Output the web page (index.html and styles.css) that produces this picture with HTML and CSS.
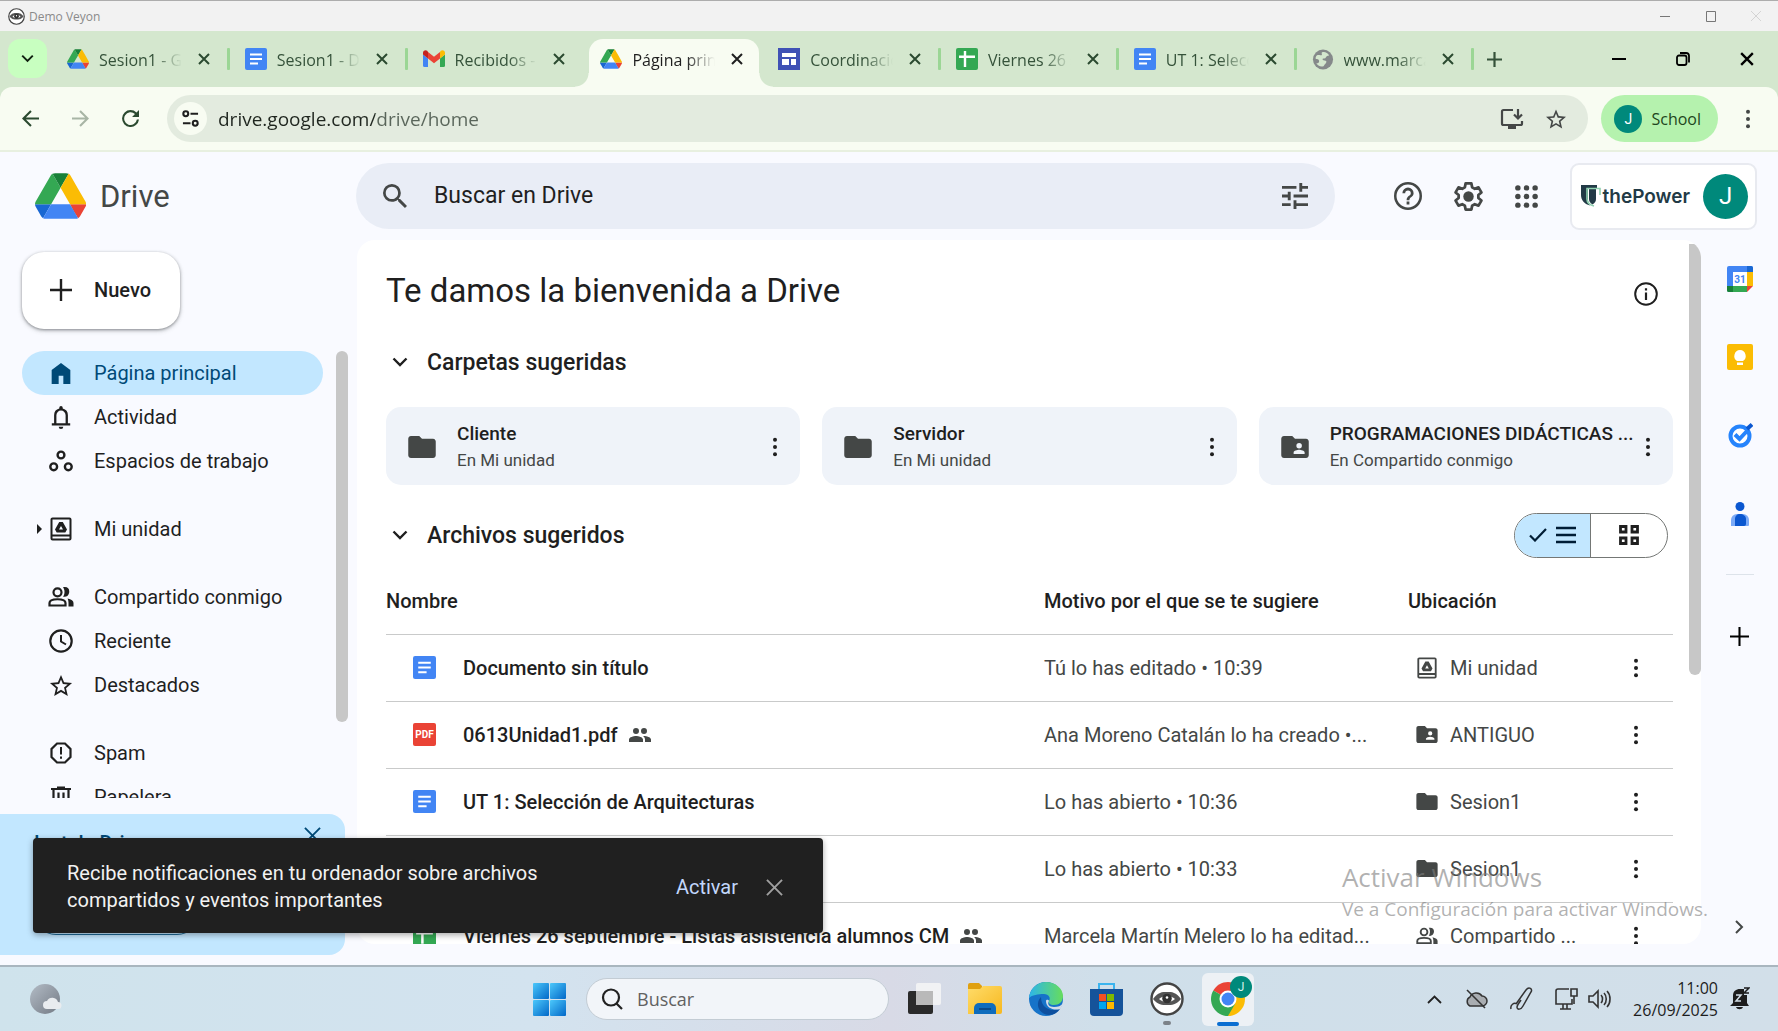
FILE: index.html
```html
<!DOCTYPE html>
<html lang="es">
<head>
<meta charset="utf-8">
<title>Demo Veyon</title>
<link rel="stylesheet" href="styles.css">
</head>
<body>
<svg class="sprite" aria-hidden="true">
  <linearGradient id="g-sky" x1="0" y1="0" x2="1" y2="1"><stop offset="0" stop-color="#4cc8fb"/><stop offset="1" stop-color="#0268c8"/></linearGradient>
  <linearGradient id="g-edge" x1="0" y1="0" x2="1" y2="0"><stop offset="0" stop-color="#2cb5ea"/><stop offset="1" stop-color="#67dd5c"/></linearGradient>
  <linearGradient id="g-moon" x1="0" y1="0" x2="1" y2="1"><stop offset="0" stop-color="#b3bcc6"/><stop offset="1" stop-color="#737a84"/></linearGradient>
  <linearGradient id="g-folder" x1="0" y1="0" x2="1" y2="1"><stop offset="0" stop-color="#ffdc6a"/><stop offset="1" stop-color="#f7b81f"/></linearGradient>
  <symbol id="drive" viewBox="0 0 87 78">
    <path fill="#1967d2" d="M6.6 66.85l3.85 6.65c.8 1.4 1.95 2.5 3.3 3.3L27.5 53H0c0 1.55.4 3.1 1.2 4.5z"/>
    <path fill="#34a853" d="M43.65 25L29.9 1.2c-1.35.8-2.5 1.9-3.3 3.3L1.2 48.5C.4 49.9 0 51.45 0 53h27.5z"/>
    <path fill="#ea4335" d="M73.55 76.8c1.35-.8 2.5-1.9 3.3-3.3l9.25-16c.8-1.4 1.2-2.95 1.2-4.5H59.8l5.85 11.5z"/>
    <path fill="#188038" d="M43.65 25L57.4 1.2C56.05.4 54.5 0 52.9 0H34.4c-1.6 0-3.15.45-4.5 1.2z"/>
    <path fill="#4285f4" d="M59.8 53H27.5L13.75 76.8c1.35.8 2.9 1.2 4.5 1.2h50.8c1.6 0 3.15-.45 4.5-1.2z"/>
    <path fill="#fbbc04" d="M73.4 26.5L60.7 4.5c-.8-1.4-1.95-2.5-3.3-3.3L43.65 25 59.8 53h27.45c0-1.55-.4-3.1-1.2-4.5z"/>
  </symbol>
  <symbol id="docs" viewBox="0 0 22 22"><rect width="22" height="22" rx="2" fill="#4285f4"/><path stroke="#fff" stroke-width="2" d="M5 6.5h12M5 11h12M5 15.500h8"/></symbol>
  <symbol id="sheets" viewBox="0 0 22 22"><rect width="22" height="22" rx="2" fill="#34a853"/><path stroke="#fff" stroke-width="2.400" d="M3 8.800h16M9 3v16"/></symbol>
  <symbol id="sites" viewBox="0 0 22 22"><rect width="22" height="22" fill="#3f51b5"/><path fill="#fff" d="M4 5h14v4H4zM4 11h7v6H4zM13 11h5v6h-5z"/></symbol>
  <symbol id="gmail" viewBox="0 0 22 18"><path fill="#4285f4" d="M1.500 17H5V8.500L0 4.500v11A1.500 1.500 0 001.500 17z"/><path fill="#34a853" d="M17 17h3.500a1.500 1.500 0 001.500-1.500v-11l-5 4z"/><path fill="#fbbc04" d="M17 2v6.500l5-4V2.800C22 .5 19.500-.6 17.800.8z"/><path fill="#ea4335" d="M5 8.500V2l6 4.700L17 2v6.500l-6 4.700z"/><path fill="#c5221f" d="M0 2.800v1.700l5 4V2L4.200.8C2.500-.6 0 .5 0 2.800z"/></symbol>
  <symbol id="globe" viewBox="0 0 24 24"><circle cx="12" cy="12" r="11.500" fill="#85898a"/><path fill="#d4e7ce" d="M13 3.500c2 0 5 1.500 6 4-2 0-3 1-4 2.500s-3 0-3.500 1.500 2 1.500 3.500 2 1 2.500-.5 3.500-1 2.500-3 3c-3 .5-6-1.500-7-4 1.500.5 2.500 0 3-1.500s-1-3-2.500-3-2-1-1-3 3-2 5-1.500 2-1 1.500-2 1-1.500 2.500-1.500z"/></symbol>
  <symbol id="veyon" viewBox="0 0 34 34"><circle cx="17" cy="17" r="15.500" fill="#fff" stroke="#444" stroke-width="2.400"/><path fill="#555" d="M3 17c5-7 9-7 14-7s9 0 14 7c-5 6-9 6-14 6s-9 0-14-6z"/><path fill="#fff" d="M9 17c4-4 12-4 16 0-4 4-12 4-16 0z"/><circle cx="17" cy="16.500" r="4.800" fill="#333"/><circle cx="17" cy="15.500" r="1.300" fill="#fff"/></symbol>
  <symbol id="x" viewBox="0 0 12 12"><path fill="none" stroke="currentColor" stroke-width="2" d="M1 1l10 10M11 1L1 11"/></symbol>
  <symbol id="x-thin" viewBox="0 0 18 18"><path fill="none" stroke="currentColor" stroke-width="2" d="M1 1l16 16M17 1L1 17"/></symbol>
  <symbol id="plus" viewBox="0 0 22 22"><path fill="none" stroke="currentColor" stroke-width="2.400" d="M11 0v22M0 11h22"/></symbol>
  <symbol id="down" viewBox="0 0 16 10"><path fill="none" stroke="currentColor" stroke-width="2.400" d="M1.500 1.500L8 8l6.500-6.500"/></symbol>
  <symbol id="back" viewBox="0 0 18 18"><path fill="none" stroke="currentColor" stroke-width="2.200" d="M18 9H2M9.500 1L1.500 9l8 8"/></symbol>
  <symbol id="forward" viewBox="0 0 18 18"><path fill="none" stroke="currentColor" stroke-width="2.200" d="M0 9h16M8.500 1l8 8-8 8"/></symbol>
  <symbol id="reload" viewBox="4 4 16 16"><path fill="currentColor" d="M17.650 6.350A7.958 7.958 0 0012 4a8 8 0 108 9h-2a6 6 0 11-1.800-5.200L13.500 10.500H20V4z"/></symbol>
  <symbol id="site" viewBox="0 0 18 18"><g fill="none" stroke="currentColor" stroke-width="2.200"><circle cx="4" cy="4" r="2.600"/><circle cx="14" cy="14" r="2.600"/><path d="M9 4h8M1 14h8"/></g></symbol>
  <symbol id="install" viewBox="0 0 24 24"><path fill="none" stroke="currentColor" stroke-width="2.200" d="M13 3H3.500A1.500 1.500 0 002 4.500v12A1.500 1.500 0 003.500 18h17a1.500 1.500 0 001.500-1.500V14M18 2v9M14 7.500l4 4 4-4"/><path fill="currentColor" d="M8 18h8v4H8z"/></symbol>
  <symbol id="star" viewBox="2 2 20 19"><path fill="currentColor" d="M22 9.240l-7.190-.62L12 2 9.190 8.630 2 9.240l5.460 4.730L5.820 21 12 17.270 18.180 21l-1.630-7.030zM12 15.400l-3.760 2.270 1-4.280-3.320-2.880 4.380-.38L12 6.100l1.710 4.040 4.380.38-3.320 2.880 1 4.280z"/></symbol>
  <symbol id="dots" viewBox="0 0 6 22"><g fill="currentColor"><circle cx="3" cy="3" r="2.200"/><circle cx="3" cy="11" r="2.200"/><circle cx="3" cy="19" r="2.200"/></g></symbol>
  <symbol id="search" viewBox="3 3 17.500 17.500"><path fill="currentColor" d="M15.500 14h-.79l-.28-.27A6.471 6.471 0 0016 9.500 6.500 6.500 0 109.500 16c1.610 0 3.090-.59 4.230-1.570l.27.28v.79l5 4.990L20.490 19zm-6 0C7.010 14 5 11.990 5 9.500S7.010 5 9.500 5 14 7.010 14 9.500 11.990 14 9.500 14z"/></symbol>
  <symbol id="tune" viewBox="3 3 18 18"><path fill="currentColor" d="M3 17v2h6v-2zM3 5v2h10V5zm10 16v-2h8v-2h-8v-2h-2v6zM7 9v2H3v2h4v2h2V9zm14 4v-2H11v2zm-6-4h2V7h4V5h-4V3h-2z"/></symbol>
  <symbol id="help" viewBox="2 2 20 20"><path fill="currentColor" d="M11 18h2v-2h-2zm1-16a10 10 0 100 20 10 10 0 000-20zm0 18.200a8.200 8.200 0 110-16.400 8.200 8.200 0 010 16.400zM12 6a4 4 0 00-4 4h2a2 2 0 114 0c0 2-3 1.750-3 5h2c0-2.250 3-2.500 3-5a4 4 0 00-4-4z"/></symbol>
  <symbol id="gear" viewBox="2 2 20 20"><path fill="none" stroke="currentColor" stroke-width="1.900" stroke-linejoin="round" d="M10 3h4l.5 2.700 1.800 1 2.600-1 2 3.500-2.100 1.800v2l2.100 1.800-2 3.500-2.600-1-1.800 1L14 21h-4l-.5-2.700-1.800-1-2.600 1-2-3.500L5.200 13v-2L3.100 9.200l2-3.500 2.600 1 1.800-1z"/><circle cx="12" cy="12" r="3.600" fill="currentColor"/></symbol>
  <symbol id="apps" viewBox="4 4 16 16"><g fill="currentColor"><circle cx="6" cy="6" r="1.900"/><circle cx="12" cy="6" r="1.900"/><circle cx="18" cy="6" r="1.900"/><circle cx="6" cy="12" r="1.900"/><circle cx="12" cy="12" r="1.900"/><circle cx="18" cy="12" r="1.900"/><circle cx="6" cy="18" r="1.900"/><circle cx="12" cy="18" r="1.900"/><circle cx="18" cy="18" r="1.900"/></g></symbol>
  <symbol id="shield" viewBox="0 0 20 22"><path fill="#223a46" d="M0 0h16v3H7v12c0 2 1 4 2 5.500C3 19 0 15 0 10z"/><path fill="#223a46" d="M8 4h7v10c0 2-1 4-3.500 5.500C9 18 8 16 8 14z"/><path fill="none" stroke="#8fd0b0" stroke-width="1.600" d="M19 10V3.500H6V14c0 4 3 6 7 7"/></symbol>
  <symbol id="home" viewBox="4 3 16 18"><path fill="currentColor" d="M4 21V9l8-6 8 6v12h-6v-7h-4v7z"/></symbol>
  <symbol id="bell" viewBox="3 2 18 20"><path fill="currentColor" d="M4 19v-2h2v-7a6 6 0 014.500-5.800V3.500a1.500 1.500 0 013 0v.7A6 6 0 0118 10v7h2v2zm4-2h8v-7a4 4 0 00-8 0zm2 3h4a2 2 0 01-4 0z"/></symbol>
  <symbol id="spaces" viewBox="0 0 24 24"><g fill="none" stroke="currentColor" stroke-width="2.400"><circle cx="12" cy="6" r="3.400"/><circle cx="4.700" cy="17.800" r="3.400"/><circle cx="19.300" cy="17.800" r="3.400"/></g></symbol>
  <symbol id="mydrive" viewBox="0 0 22 24"><path fill="none" stroke="currentColor" stroke-width="2" d="M2.500 1.500h17a1 1 0 011 1v19a1 1 0 01-1 1h-17a1 1 0 01-1-1v-19a1 1 0 011-1zM2 18.500h18"/><path fill="currentColor" fill-rule="evenodd" d="M9.200 5h3.600L17 12.500 15.300 15.500H6.700L5 12.500zM11 9l-2 3.500h4z"/></symbol>
  <symbol id="people" viewBox="0 0 26 20"><g fill="none" stroke="currentColor" stroke-width="2.200"><circle cx="9.500" cy="5.300" r="4"/><path d="M1.500 18.500V16c0-5 16-5 16 0v2.500z"/></g><path fill="currentColor" d="M15 .3c5-1 7 2 6 6-.8 3-3 4-6 3.400 2-2.500 2-7 0-9.400zM19.500 11.500c4 .8 6 2.500 6 4.500v3.600h-5V16c0-2-.3-3-1-4.500z"/></symbol>
  <symbol id="clock" viewBox="0 0 24 24"><circle cx="12" cy="12" r="10.700" fill="none" stroke="currentColor" stroke-width="2.200"/><path fill="none" stroke="currentColor" stroke-width="2" d="M12 6v6.500l5 3"/></symbol>
  <symbol id="spam" viewBox="0 0 22 22"><path fill="none" stroke="currentColor" stroke-width="2.200" d="M7 1.500h8L20.500 7v8L15 20.500H7L1.500 15V7z"/><path fill="currentColor" d="M10 5h2v7.500h-2zM10 14.500h2v2.200h-2z"/></symbol>
  <symbol id="trash" viewBox="0 0 20 22"><path fill="none" stroke="currentColor" stroke-width="2.200" d="M0 3h20M6 1.500h8M2.500 3v17.500h15V3M7.500 6.500v11M12.500 6.500v11"/></symbol>
  <symbol id="folder" viewBox="2 4 20 16"><path fill="currentColor" d="M10 4H4c-1.100 0-2 .9-2 2v12c0 1.100.9 2 2 2h16c1.100 0 2-.9 2-2V8c0-1.100-.9-2-2-2h-8z"/></symbol>
  <symbol id="folder-shared" viewBox="2 4 20 16"><path fill="currentColor" d="M20 6h-8l-2-2H4c-1.100 0-2 .9-2 2v12c0 1.100.9 2 2 2h16c1.100 0 2-.9 2-2V8c0-1.100-.9-2-2-2zm-5 3a2 2 0 110 4 2 2 0 010-4zm4 8h-8v-1c0-1.330 2.670-2 4-2s4 .67 4 2z"/></symbol>
  <symbol id="group" viewBox="1 5 22 14"><path fill="currentColor" d="M16 11a3 3 0 10-3-3 3 3 0 003 3zm-8 0a3 3 0 10-3-3 3 3 0 003 3zm0 2c-2.330 0-7 1.170-7 3.500V19h14v-2.500C15 14.170 10.330 13 8 13zm8 0c-.29 0-.62.020-.97.050 1.160.84 1.970 1.970 1.970 3.450V19h6v-2.500c0-2.330-4.670-3.500-7-3.500z"/></symbol>
  <symbol id="info" viewBox="0 0 24 24"><circle cx="12" cy="12" r="10.800" fill="none" stroke="currentColor" stroke-width="2"/><path fill="currentColor" d="M10.900 10.500h2.200V18h-2.200zM10.900 6.300h2.200v2.200h-2.200z"/></symbol>
  <symbol id="check" viewBox="0 0 18 14"><path fill="none" stroke="currentColor" stroke-width="2.200" d="M1 7.500l5 5L17 1"/></symbol>
  <symbol id="list" viewBox="0 0 20 18"><path stroke="currentColor" stroke-width="2.600" d="M0 2h20M0 9h20M0 16h20"/></symbol>
  <symbol id="grid" viewBox="0 0 20 20"><path fill="none" stroke="currentColor" stroke-width="2.800" d="M1.500 1.500h5.500v5.500H1.500zM13 1.500h5.500v5.500H13zM1.500 13h5.500v5.500H1.500zM13 13h5.500v5.500H13z"/></symbol>
</svg>

<header class="titlebar">
  <svg width="17" height="17"><use href="#veyon"/></svg>
  <span class="titlebar-name">Demo Veyon</span>
  <svg class="titlebar-controls" width="102" height="14" viewBox="0 0 102 14" fill="none"><path stroke="#777" d="M0 7.500h10M46.500 2.500h9v10h-9z"/><path stroke="#d4d4d4" d="M91 2l10 10M101 2L91 12"/></svg>
</header>

<div class="tabstrip">
  <button class="tab-search" aria-label="Buscar pestañas"><svg width="13" height="9"><use href="#down"/></svg></button>
  <div class="tabs">
    <div class="tab"><svg width="21" height="20"><use href="#drive"/></svg><span class="tab-name">Sesion1 - Google Drive</span><button class="tab-close" aria-label="Cerrar"><svg width="12" height="12"><use href="#x"/></svg></button></div>
    <div class="tab"><svg width="22" height="22"><use href="#docs"/></svg><span class="tab-name">Sesion1 - Documentos</span><button class="tab-close" aria-label="Cerrar"><svg width="12" height="12"><use href="#x"/></svg></button></div>
    <div class="tab before-active"><svg width="21" height="18"><use href="#gmail"/></svg><span class="tab-name">Recibidos - Gmail</span><button class="tab-close" aria-label="Cerrar"><svg width="12" height="12"><use href="#x"/></svg></button></div>
    <div class="tab active"><svg width="21" height="20"><use href="#drive"/></svg><span class="tab-name">Página principal</span><button class="tab-close" aria-label="Cerrar"><svg width="12" height="12"><use href="#x"/></svg></button></div>
    <div class="tab"><svg width="22" height="22"><use href="#sites"/></svg><span class="tab-name">Coordinación</span><button class="tab-close" aria-label="Cerrar"><svg width="12" height="12"><use href="#x"/></svg></button></div>
    <div class="tab"><svg width="22" height="22"><use href="#sheets"/></svg><span class="tab-name">Viernes 26 septiembre</span><button class="tab-close" aria-label="Cerrar"><svg width="12" height="12"><use href="#x"/></svg></button></div>
    <div class="tab"><svg width="22" height="22"><use href="#docs"/></svg><span class="tab-name">UT 1: Selección</span><button class="tab-close" aria-label="Cerrar"><svg width="12" height="12"><use href="#x"/></svg></button></div>
    <div class="tab"><svg width="21" height="21"><use href="#globe"/></svg><span class="tab-name">www.marca.com</span><button class="tab-close" aria-label="Cerrar"><svg width="12" height="12"><use href="#x"/></svg></button></div>
  </div>
  <button class="new-tab" aria-label="Nueva pestaña"><svg width="15" height="15" viewBox="0 0 15 15"><path stroke="currentColor" stroke-width="2.200" d="M7.500 0v15M0 7.500h15"/></svg></button>
  <div class="window-controls">
    <button aria-label="Minimizar"><svg width="14" height="14"><path stroke="#000" stroke-width="2" d="M0 7h14"/></svg></button>
    <button aria-label="Restaurar"><svg width="14" height="14" viewBox="0 0 14 14" fill="none" stroke="#000" stroke-width="1.800"><rect x="1" y="3.500" width="9.500" height="9.500" rx="2"/><path d="M4 1h6a3 3 0 013 3v6.500"/></svg></button>
    <button aria-label="Cerrar"><svg width="14" height="14"><use href="#x"/></svg></button>
  </div>
</div>

<div class="toolbar">
  <button class="tool" aria-label="Atrás"><svg width="17" height="17"><use href="#back"/></svg></button>
  <button class="tool disabled" aria-label="Adelante"><svg width="17" height="17"><use href="#forward"/></svg></button>
  <button class="tool last" aria-label="Recargar"><svg width="17" height="17"><use href="#reload"/></svg></button>
  <div class="omnibox">
    <button class="site-info" aria-label="Información del sitio"><svg width="17" height="17"><use href="#site"/></svg></button>
    <input class="url" type="text" aria-label="Dirección" value="drive.google.com/drive/home">
    <button class="plain" aria-label="Instalar"><svg width="24" height="24"><use href="#install"/></svg></button>
    <button class="plain" aria-label="Marcador"><svg width="20" height="20"><use href="#star"/></svg></button>
  </div>
  <button class="profile"><span class="avatar small">J</span>School</button>
  <button class="plain" aria-label="Menú"><svg width="6" height="20"><use href="#dots"/></svg></button>
</div>

<div class="app">
  <header class="app-header">
    <a class="brand" href="#"><svg width="51" height="46"><use href="#drive"/></svg>Drive</a>
    <div class="search">
      <svg width="24" height="24"><use href="#search"/></svg>
      <input type="text" aria-label="Buscar en Drive" placeholder="Buscar en Drive">
      <button class="plain" aria-label="Filtros"><svg width="26" height="26"><use href="#tune"/></svg></button>
    </div>
    <div class="header-actions">
      <button class="plain" aria-label="Ayuda"><svg width="28" height="28"><use href="#help"/></svg></button>
      <button class="plain" aria-label="Ajustes"><svg width="29" height="29"><use href="#gear"/></svg></button>
      <button class="plain" aria-label="Aplicaciones"><svg width="23" height="23"><use href="#apps"/></svg></button>
      <button class="account"><svg width="20" height="22"><use href="#shield"/></svg><span class="org">thePower</span><span class="avatar">J</span></button>
    </div>
  </header>

  <div class="body">
    <aside class="sidebar">
      <button class="new"><svg width="22" height="22"><use href="#plus"/></svg>Nuevo</button>
      <div class="nav-wrap">
        <nav class="nav">
          <div class="nav-group">
            <a class="nav-item current" href="#"><svg width="26" height="21"><use href="#home"/></svg>Página principal</a>
            <a class="nav-item" href="#"><svg width="26" height="23"><use href="#bell"/></svg>Actividad</a>
            <a class="nav-item" href="#"><svg width="26" height="24"><use href="#spaces"/></svg>Espacios de trabajo</a>
          </div>
          <div class="nav-group">
            <a class="nav-item expandable" href="#"><svg width="26" height="24"><use href="#mydrive"/></svg>Mi unidad</a>
          </div>
          <div class="nav-group">
            <a class="nav-item" href="#"><svg width="26" height="20"><use href="#people"/></svg>Compartido conmigo</a>
            <a class="nav-item" href="#"><svg width="26" height="24"><use href="#clock"/></svg>Reciente</a>
            <a class="nav-item" href="#"><svg width="26" height="21"><use href="#star"/></svg>Destacados</a>
          </div>
          <div class="nav-group">
            <a class="nav-item" href="#"><svg width="26" height="22"><use href="#spam"/></svg>Spam</a>
            <a class="nav-item" href="#"><svg width="26" height="22"><use href="#trash"/></svg>Papelera</a>
          </div>
        </nav>
        <div class="nav-thumb"></div>
      </div>
      <section class="promo">
        <div class="promo-head"><h2>Instala Drive</h2><button class="plain" aria-label="Cerrar"><svg width="17" height="17"><use href="#x-thin"/></svg></button></div>
        <button class="promo-button" aria-label="Descargar"></button>
      </section>
    </aside>

    <main class="panel">
      <div class="content">
        <div class="title-row"><h1>Te damos la bienvenida a Drive</h1><button class="plain" aria-label="Detalles"><svg width="24" height="24"><use href="#info"/></svg></button></div>
        <h2 class="section"><svg width="16" height="10"><use href="#down"/></svg>Carpetas sugeridas</h2>
        <div class="folders">
          <article class="folder"><svg width="28" height="22"><use href="#folder"/></svg><div class="folder-text"><h3>Cliente</h3><p>En Mi unidad</p></div><button class="plain" aria-label="Más"><svg width="6" height="20"><use href="#dots"/></svg></button></article>
          <article class="folder"><svg width="28" height="22"><use href="#folder"/></svg><div class="folder-text"><h3>Servidor</h3><p>En Mi unidad</p></div><button class="plain" aria-label="Más"><svg width="6" height="20"><use href="#dots"/></svg></button></article>
          <article class="folder"><svg width="28" height="22"><use href="#folder-shared"/></svg><div class="folder-text"><h3>PROGRAMACIONES DIDÁCTICAS ...</h3><p>En Compartido conmigo</p></div><button class="plain" aria-label="Más"><svg width="6" height="20"><use href="#dots"/></svg></button></article>
        </div>
        <div class="files-row">
          <h2 class="section"><svg width="16" height="10"><use href="#down"/></svg>Archivos sugeridos</h2>
          <div class="toggle">
            <button class="on" aria-label="Lista"><svg width="18" height="14"><use href="#check"/></svg><svg width="20" height="18"><use href="#list"/></svg></button>
            <button aria-label="Cuadrícula"><svg width="20" height="20"><use href="#grid"/></svg></button>
          </div>
        </div>
        <table class="files">
          <colgroup><col><col class="col-reason"><col class="col-place"><col class="col-menu"></colgroup>
          <thead><tr><th>Nombre</th><th>Motivo por el que se te sugiere</th><th>Ubicación</th><th></th></tr></thead>
          <tbody>
            <tr><td><div class="name"><svg width="23" height="23"><use href="#docs"/></svg>Documento sin título</div></td><td><div class="reason">Tú lo has editado • 10:39</div></td><td><div class="place"><svg width="22" height="22"><use href="#mydrive"/></svg>Mi unidad</div></td><td><button class="plain" aria-label="Más"><svg width="6" height="20"><use href="#dots"/></svg></button></td></tr>
            <tr><td><div class="name"><span class="pdf">PDF</span>0613Unidad1.pdf<svg class="shared" width="22" height="14"><use href="#group"/></svg></div></td><td><div class="reason">Ana Moreno Catalán lo ha creado •...</div></td><td><div class="place"><svg width="22" height="17"><use href="#folder-shared"/></svg>ANTIGUO</div></td><td><button class="plain" aria-label="Más"><svg width="6" height="20"><use href="#dots"/></svg></button></td></tr>
            <tr><td><div class="name"><svg width="23" height="23"><use href="#docs"/></svg>UT 1: Selección de Arquitecturas</div></td><td><div class="reason">Lo has abierto • 10:36</div></td><td><div class="place"><svg width="22" height="17"><use href="#folder"/></svg>Sesion1</div></td><td><button class="plain" aria-label="Más"><svg width="6" height="20"><use href="#dots"/></svg></button></td></tr>
            <tr><td></td><td><div class="reason">Lo has abierto • 10:33</div></td><td><div class="place"><svg width="22" height="17"><use href="#folder"/></svg>Sesion1</div></td><td><button class="plain" aria-label="Más"><svg width="6" height="20"><use href="#dots"/></svg></button></td></tr>
            <tr><td><div class="name"><svg width="23" height="23"><use href="#sheets"/></svg>Viernes 26 septiembre - Listas asistencia alumnos CM<svg class="shared" width="22" height="14"><use href="#group"/></svg></div></td><td><div class="reason">Marcela Martín Melero lo ha editad...</div></td><td><div class="place"><svg width="22" height="18"><use href="#people"/></svg>Compartido ...</div></td><td><button class="plain" aria-label="Más"><svg width="6" height="20"><use href="#dots"/></svg></button></td></tr>
          </tbody>
        </table>
      </div>
      <div class="panel-thumb"></div>
    </main>

    <aside class="addons">
      <button class="plain" aria-label="Calendar"><svg width="26" height="26" viewBox="0 0 26 26"><rect width="26" height="26" rx="2" fill="#4285f4"/><path fill="#1967d2" d="M20 0h4a2 2 0 012 2v4h-6z"/><path fill="#fbbc04" d="M20 6h6v14h-6z"/><path fill="#34a853" d="M0 20h20v6H2a2 2 0 01-2-2z"/><path fill="#188038" d="M0 20h6v6H2a2 2 0 01-2-2z"/><path fill="#f9faff" d="M20 20h6v6h-6z"/><path fill="#ea4335" d="M20 20h6l-6 6z"/><path fill="#fff" d="M6 6h14v14H6z"/><text x="13" y="17" text-anchor="middle" class="cal-num">31</text></svg></button>
      <button class="plain" aria-label="Keep"><svg width="26" height="26" viewBox="0 0 26 26"><rect width="26" height="26" rx="2" fill="#fbbc04"/><path fill="#fff" d="M13 6a6 6 0 00-3 11h6a6 6 0 00-3-11zM10 18.500h6V21h-6z"/></svg></button>
      <button class="plain" aria-label="Tasks"><svg width="26" height="26" viewBox="0 0 26 26"><circle cx="13" cy="14" r="9.500" fill="#fff" stroke="#2684fc" stroke-width="4"/><path fill="none" stroke="#0b57d0" stroke-width="4" d="M20 7L25 2.500"/><path fill="none" stroke="#2684fc" stroke-width="4" d="M8 12.500l4.500 4.500L20 9"/></svg></button>
      <button class="plain" aria-label="Contactos"><svg width="26" height="26" viewBox="0 0 26 26"><circle cx="13" cy="6.500" r="4.500" fill="#0b57d0"/><path fill="#7baaf7" d="M4 26v-6a6 6 0 016-6h6a6 6 0 016 6v5a1 1 0 01-1 1z"/><path fill="#0b57d0" d="M8 26v-7c0-3 2-5 5-5s6 2 6 5v5a2 2 0 01-2 2z"/></svg></button>
      <hr>
      <button class="plain black" aria-label="Complementos"><svg width="19" height="19"><use href="#plus"/></svg></button>
      <button class="plain hide" aria-label="Ocultar"><svg width="9" height="14" viewBox="0 0 9 14" fill="none" stroke="#444746" stroke-width="2"><path d="M1 1l6 6-6 6"/></svg></button>
    </aside>
  </div>

  <div class="snackbar" role="status">
    <p>Recibe notificaciones en tu ordenador sobre archivos compartidos y eventos importantes</p>
    <button class="snack-action">Activar</button>
    <button class="plain snack-close" aria-label="Cerrar"><svg width="17" height="17"><use href="#x-thin"/></svg></button>
  </div>
  <div class="watermark"><strong>Activar Windows</strong><span>Ve a Configuración para activar Windows.</span></div>
</div>

<footer class="taskbar">
  <svg class="weather" width="32" height="30" viewBox="0 0 32 30"><circle cx="15" cy="15" r="15" fill="url(#g-moon)"/><path fill="#e9ecef" d="M17 25a4 4 0 010-8 6 6 0 0111 1 3.500 3.500 0 010 7z"/></svg>
  <div class="task-apps">
    <button class="plain" aria-label="Inicio"><svg width="33" height="33" viewBox="0 0 33 33" fill="url(#g-sky)"><rect width="16" height="16" rx="1"/><rect x="17" width="16" height="16" rx="1"/><rect y="17" width="16" height="16" rx="1"/><rect x="17" y="17" width="16" height="16" rx="1"/></svg></button>
    <label class="task-search"><svg width="22" height="22" viewBox="0 0 22 22" fill="none" stroke="#222" stroke-width="2.200"><circle cx="10" cy="9.500" r="8"/><path d="M15.500 15.500L21 21"/></svg><input type="text" placeholder="Buscar" aria-label="Buscar"></label>
    <button class="plain" aria-label="Vista de tareas"><svg width="33" height="32" viewBox="0 0 33 32"><rect y="8" width="25" height="23" rx="2" fill="#2a2a2a"/><rect x="8" width="25" height="22" rx="2" fill="#f6f6f6" opacity=".85"/><path fill="#b9b9b9" d="M8 8h17v14H8z"/></svg></button>
    <button class="plain" aria-label="Explorador"><svg width="34" height="32" viewBox="0 0 34 32"><path fill="#e0a010" d="M0 2a2 2 0 012-2h9l3 3v6H0z"/><path fill="url(#g-folder)" d="M0 6h12l3-3h17a2 2 0 012 2v24a2 2 0 01-2 2H0z"/><path fill="#0f6cbd" d="M6 31v-6a5 5 0 015-5h12a5 5 0 015 5v6z"/><path stroke="#0a4a8a" stroke-width="2" d="M11 26h12"/></svg></button>
    <button class="plain" aria-label="Edge"><svg width="34" height="34" viewBox="0 0 34 34"><circle cx="17" cy="17" r="17" fill="#1673c9"/><path fill="url(#g-edge)" d="M0 16C1 6 9 0 17 0c10 0 17 7 17 14 0 6-4 9-9 9-4 0-6-2-5-4 2-3 0-7-5-7C9 12 3 13 0 16z"/><path fill="#0d4f9e" d="M12 15c-6 6-3 17 8 18 5 0 9-3 11-6-8 3-19 0-19-12z"/><path fill="#d5dce8" d="M20 19c-2 3 0 6 5 6 4 0 7-1 9-4-1 3-2 5-3 6-6 2-14-1-14-8 0-1 2-2 3 0z"/></svg></button>
    <button class="plain" aria-label="Store"><svg width="33" height="34" viewBox="0 0 33 34"><path fill="none" stroke="#3bb4ee" stroke-width="2" d="M9 8V2h15v6"/><path fill="#15539a" d="M0 7h33v23a4 4 0 01-4 4H4a4 4 0 01-4-4z"/><path fill="#f25022" d="M9 12h7v7H9z"/><path fill="#7fba00" d="M17 12h7v7h-7z"/><path fill="#00a4ef" d="M9 20h7v7H9z"/><path fill="#ffb900" d="M17 20h7v7h-7z"/></svg></button>
    <button class="plain running" aria-label="Veyon"><svg width="34" height="34"><use href="#veyon"/></svg></button>
    <button class="plain focused" aria-label="Chrome"><svg width="34" height="34" viewBox="0 0 34 34"><path fill="#ea4335" d="M17 17L2.300 8.500a17 17 0 0129.400 0z"/><path fill="#fbbc04" d="M17 17l14.700-8.500A17 17 0 0117 34z"/><path fill="#34a853" d="M17 17v17A17 17 0 012.300 8.500z"/><path fill="#ea4335" d="M17 9h14.900l-.2-.5L17 5z"/><path fill="#34a853" d="M10 21l7 13 7-12z"/><circle cx="17" cy="17" r="8.500" fill="#fff"/><circle cx="17" cy="17" r="6.500" fill="#4285f4"/></svg><span class="badge">J</span></button>
  </div>
  <div class="tray">
    <svg width="15" height="9" viewBox="0 0 15 9" fill="none" stroke="#222" stroke-width="1.800"><path d="M1 8l6.500-6.500L14 8"/></svg>
    <svg width="24" height="20" viewBox="0 0 24 20"><path fill="#a9adb1" stroke="#333" stroke-width="1.500" d="M6 17a5 5 0 010-9 7 7 0 0112-1 5 5 0 010 10z"/><path stroke="#333" stroke-width="1.600" d="M3 1l18 18"/></svg>
    <svg width="23" height="24" viewBox="0 0 23 24" fill="none" stroke="#333" stroke-width="1.500"><path d="M6 17L16 3c3-4 7-1 5 2L13 19c-2 4-6 4-6 1 0-2 2-4 4-7M1 22c-1-4 3-7 6-5"/></svg>
    <svg width="23" height="24" viewBox="0 0 23 24" fill="none" stroke="#333" stroke-width="1.600"><path d="M14 2H3a2 2 0 00-2 2v13h16v-5M5 22h11M8 17v5M12 17v5M16 2h6v7h-6zM19 9v8"/></svg>
    <svg width="23" height="20" viewBox="0 0 23 20" fill="none" stroke="#333" stroke-width="1.600"><path d="M1 7h4l5-5v16l-5-5H1zM13 6c2 2 2 6 0 8M16 4c3 3 3 9 0 12M19 2c4 4 4 12 0 16"/></svg>
    <time class="clock-text">11:00<br>26/09/2025</time>
    <svg width="20" height="24" viewBox="0 0 20 24"><path fill="#1d1d1d" d="M3 16V9c0-5 3-7 7-7h4v6h3v8l2 3H0zM6 20h7c-1 3-6 3-7 0z"/><path fill="none" stroke="#d4e0e9" stroke-width="1.500" d="M6 8h5l-5 6h5"/><path fill="none" stroke="#1d1d1d" stroke-width="1.500" d="M14 1h5l-5 5h5"/></svg>
  </div>
</footer>
</body>
</html>
```
FILE: styles.css
```css
* { box-sizing: border-box; }

body {
  margin: 0;
  height: 100vh;
  display: flex;
  flex-direction: column;
  overflow: hidden;
  background: #d4e7ce;
  font-family: Roboto, "Noto Sans", sans-serif;
  color: #1f1f1f;
}

h1, h2, h3, p { margin: 0; font-weight: 400; }
svg { display: block; flex: none; }
.sprite { position: absolute; width: 0; height: 0; }
a { color: inherit; text-decoration: none; }

button, input {
  margin: 0;
  padding: 0;
  border: 0;
  background: none;
  font: inherit;
  color: inherit;
}
input { outline: 0; min-width: 0; }
.plain { display: flex; align-items: center; justify-content: center; color: #444746; }

/* Outer window */
.titlebar {
  flex: none;
  height: 31px;
  padding: 0 16px 0 8px;
  border-top: 1px solid #adadad;
  display: flex;
  align-items: center;
  gap: 4px;
  background: #f2f2f2;
  font: 12px "Open Sans", sans-serif;
  color: #8a8a8a;
}
.titlebar-controls { margin-left: auto; }

/* Browser tabs */
.tabstrip {
  flex: none;
  height: 56px;
  padding-left: 8px;
  display: flex;
  background: #d4e7ce;
  font: 16px "Open Sans", sans-serif;
  color: #35523a;
}
.tab-search {
  width: 39px;
  height: 39px;
  margin: 8px 5px 0 0;
  border-radius: 12px;
  background: #c8ffc0;
  color: #102010;
  display: flex;
  align-items: center;
  justify-content: center;
}
.tabs { flex: 0 1 80vw; min-width: 0; display: flex; }
.tab {
  position: relative;
  flex: 1 1 0;
  min-width: 0;
  padding: 0 20px 0 15px;
  display: flex;
  align-items: center;
}
.tab::after {
  content: "";
  position: absolute;
  right: 0;
  top: 17px;
  width: 3px;
  height: 22px;
  background: #9bd695;
  border-radius: 1px;
}
.tab.before-active::after { display: none; }
.tab-name {
  flex: 1;
  min-width: 0;
  margin: 2px 16px 0 10px;
  overflow: hidden;
  white-space: nowrap;
  -webkit-mask-image: linear-gradient(90deg, #000 65%, transparent 100%);
  mask-image: linear-gradient(90deg, #000 65%, transparent 100%);
}
.tab > svg { width: 22px; }
.tab-close { color: #2b4a30; }
.tab.active { color: #1f1f1f; }
.tab.active > * { position: relative; z-index: 1; }
.tab.active .tab-close { color: #1f1f1f; }
.tab.active::before {
  content: "";
  position: absolute;
  left: 4px;
  right: 4px;
  top: 8px;
  bottom: 0;
  background: #f8fcf2;
  border-radius: 14px 14px 0 0;
}
.tab.active::after {
  left: -10px;
  right: -10px;
  top: auto;
  bottom: 0;
  width: auto;
  height: 14px;
  background:
    radial-gradient(circle at 0 0, transparent 13px, #f8fcf2 14px) left / 14px 14px no-repeat,
    radial-gradient(circle at 100% 0, transparent 13px, #f8fcf2 14px) right / 14px 14px no-repeat;
}
.new-tab { margin-left: 13px; }
.window-controls { margin: 0 24px 0 auto; display: flex; align-items: center; gap: 50px; color: #000; }
.window-controls button, .new-tab { display: flex; align-items: center; }

/* Browser toolbar */
.toolbar {
  flex: none;
  height: 65px;
  padding: 8px 27px 8px 22px;
  border-bottom: 2px solid #e8f0e0;
  border-radius: 12px 12px 0 0;
  background: #f8fcf2;
  display: flex;
  align-items: center;
  font: 16px "Open Sans", sans-serif;
}
.tool { width: 17px; margin-right: 33px; color: #2b4a30; display: flex; }
.tool.disabled { color: #a8b5a5; }
.tool.last { margin-right: 28px; }
.omnibox {
  flex: 1;
  height: 47px;
  margin-right: 13px;
  padding: 0 22px 0 7px;
  border-radius: 24px;
  background: #e3ebdf;
  display: flex;
  align-items: center;
}
.site-info {
  width: 33px;
  height: 33px;
  border-radius: 50%;
  background: #f8fcf2;
  display: flex;
  align-items: center;
  justify-content: center;
}
.url {
  flex: 1;
  margin-left: 11px;
  font-size: 19px;
  color: transparent;
  background: linear-gradient(90deg, #1f261f 157px, #59655a 157px);
  -webkit-background-clip: text;
  background-clip: text;
}
.omnibox .plain { margin-left: 22px; }
.profile {
  height: 47px;
  margin-right: 27px;
  padding: 0 17px 0 13px;
  border-radius: 24px;
  background: #b5f2ae;
  color: #1e4620;
  display: flex;
  align-items: center;
  gap: 9px;
}
.avatar {
  width: 45px;
  height: 45px;
  border-radius: 50%;
  background: #00897b;
  color: #fff;
  font: 24px Roboto, sans-serif;
  display: flex;
  align-items: center;
  justify-content: center;
}
.avatar.small { width: 28px; height: 28px; font-size: 14px; }

/* Drive */
.app {
  position: relative;
  flex: 1;
  min-height: 0;
  background: #f9faff;
  display: flex;
  flex-direction: column;
}
.app-header {
  flex: none;
  height: 88px;
  padding: 11px 21px 11px 0;
  display: flex;
  align-items: center;
}
.brand {
  width: 356px;
  padding-left: 35px;
  display: flex;
  align-items: center;
  gap: 14px;
  font-size: 31px;
  color: #444746;
}
.search {
  flex: 0 1 979px;
  height: 66px;
  padding: 0 27px;
  border-radius: 33px;
  background: #e9edf6;
  color: #444746;
  display: flex;
  align-items: center;
  gap: 27px;
}
.search input { flex: 1; padding-bottom: 2px; font-size: 23px; color: #1f1f1f; }
.search input::placeholder { color: #1f1f1f; opacity: 1; }
.header-actions { margin-left: auto; display: flex; align-items: center; gap: 32px; }
.account {
  height: 67px;
  padding: 0 7px 0 9px;
  border: 2px solid #e8eaf0;
  border-radius: 9px;
  background: #fff;
  display: flex;
  align-items: center;
  gap: 2px;
}
.account .avatar { margin-left: 11px; }
.org { font: 600 19px Inter, sans-serif; color: #223a46; }

.body {
  flex: 1;
  min-height: 0;
  display: grid;
  grid-template-columns: 357px minmax(0, 1fr) 77px;
}

/* Sidebar */
.sidebar { min-height: 0; padding: 12px 0 10px; display: flex; flex-direction: column; }
.new {
  align-self: flex-start;
  flex: none;
  height: 77px;
  margin: 0 0 22px 22px;
  padding: 0 29px 1px 28px;
  border-radius: 22px;
  background: #fff;
  box-shadow: 0 1px 3px rgba(60, 64, 67, .5), 0 2px 5px rgba(60, 64, 67, .2);
  display: flex;
  align-items: center;
  gap: 22px;
  font-weight: 500;
  font-size: 20px;
}
.nav-wrap { flex: 1; min-height: 0; display: flex; justify-content: space-between; padding-right: 9px; }
.nav {
  width: 323px;
  padding-left: 22px;
  overflow: hidden;
  display: flex;
  flex-direction: column;
  gap: 24px;
}
.nav-item {
  position: relative;
  height: 44px;
  padding-left: 26px;
  border-radius: 22px;
  display: flex;
  align-items: center;
  gap: 20px;
  font-size: 20px;
}
.nav-item.current { background: #c2e7ff; color: #004a77; }
.nav-item.expandable::before {
  content: "";
  position: absolute;
  left: 15px;
  border: 5px solid transparent;
  border-left-color: #1f1f1f;
  border-right: 0;
}
.nav-thumb { width: 12px; height: 83%; border-radius: 6px; background: #c7c7c7; }
.promo {
  flex: none;
  height: 141px;
  width: 345px;
  margin-top: 16px;
  padding: 10px 24px 20px 34px;
  border-radius: 0 16px 16px 0;
  background: #c2e7ff;
  color: #004a77;
  display: flex;
  flex-direction: column;
  justify-content: space-between;
}
.promo-head { display: flex; align-items: flex-start; justify-content: space-between; }
.promo-head h2 { margin-top: 7px; font-weight: 500; font-size: 20px; line-height: 24px; white-space: nowrap; }
.promo .plain { margin-top: 3px; color: #004a77; }
.promo-button { width: 165px; height: 44px; border: 1px solid #1f6a97; border-radius: 22px; }

/* Main panel */
.panel {
  min-width: 0;
  min-height: 0;
  margin-bottom: 21px;
  border-radius: 18px;
  background: #fff;
  overflow: hidden;
  display: flex;
}
.content { flex: 1; min-width: 0; padding: 27px 16px 0 29px; }
.title-row { height: 48px; padding-right: 15px; display: flex; align-items: center; justify-content: space-between; }
.title-row .plain { color: #1f1f1f; padding-top: 6px; }
h1 { font-size: 33px; line-height: 44px; }
.section { height: 46px; padding-left: 6px; display: flex; align-items: center; gap: 19px; font-weight: 500; font-size: 23px; }
.title-row + .section { margin-top: 24px; }
.folders { margin-top: 22px; display: grid; grid-template-columns: repeat(3, minmax(0, 1fr)); gap: 22px; }
.folder {
  height: 78px;
  padding: 1px 22px 0 22px;
  border-radius: 15px;
  background: #eff3f9;
  color: #444746;
  display: flex;
  align-items: center;
}
.folder-text { flex: 1; min-width: 0; margin-left: 21px; }
.folder-text h3 { font-weight: 500; font-size: 19px; line-height: 26px; color: #1f1f1f; white-space: nowrap; }
.folder-text p { font-size: 17px; line-height: 26px; }
.folder .plain, .files .plain { color: #1f1f1f; }
.files-row { margin-top: 27px; padding-right: 5px; display: flex; align-items: center; justify-content: space-between; }
.toggle { height: 45px; border: 1px solid #747775; border-radius: 23px; display: flex; overflow: hidden; }
.toggle button { width: 76px; display: flex; align-items: center; justify-content: center; gap: 9px; }
.toggle .on { background: #c2e7ff; border-right: 1px solid #747775; color: #001d35; }

.files { width: 100%; margin-top: 9px; border-collapse: collapse; table-layout: fixed; font-size: 20px; }
.col-reason { width: 364px; }
.col-place { width: 204px; }
.col-menu { width: 61px; }
.files th, .files td { height: 67px; padding: 0; border-bottom: 1px solid #c9caca; text-align: left; font-weight: 500; }
.files th { padding-top: 2px; }
.name, .place { display: flex; align-items: center; white-space: nowrap; font-weight: 500; }
.name { padding-left: 27px; gap: 27px; }
.name .shared { margin-left: -16px; color: #444746; }
.reason, .place { font-weight: 400; color: #444746; white-space: nowrap; }
.place { padding-left: 8px; gap: 12px; }
.files .plain { padding-left: 21px; }
.pdf {
  width: 23px;
  height: 23px;
  border-radius: 2px;
  background: #ea4335;
  color: #fff;
  font: 700 10px/23px Roboto, sans-serif;
  text-align: center;
}
.panel-thumb { width: 12px; height: 431px; margin-top: 4px; border-radius: 0 0 6px 6px; background: #c7c7c7; }

/* Add-ons rail */
.addons { padding: 26px 0 11px; display: flex; flex-direction: column; align-items: center; gap: 52px; }
.addons hr { width: 28px; height: 1px; margin: -4px 0 0; border: 0; background: #dde3ea; }
.black { color: #000; }
.addons .hide { margin-top: auto; padding-bottom: 20px; }
.cal-num { font: 700 10px Roboto, sans-serif; fill: #4285f4; }

/* Overlays */
.snackbar {
  position: absolute;
  left: 33px;
  bottom: 32px;
  width: 790px;
  height: 95px;
  padding: 3px 40px 0 34px;
  border-radius: 4px;
  background: #202020;
  box-shadow: 0 2px 6px rgba(0, 0, 0, .35);
  color: #f2f2f2;
  display: flex;
  align-items: center;
  font-size: 20px;
  line-height: 27px;
}
.snackbar p { width: 500px; margin-right: auto; }
.snack-action { margin-right: 28px; color: #c2d7fb; }
.snack-close { color: #a0a0a0; }
.watermark {
  position: absolute;
  right: 70px;
  bottom: 43px;
  pointer-events: none;
  font-family: "Open Sans", sans-serif;
  color: rgba(125, 125, 125, .6);
  display: flex;
  flex-direction: column;
}
.watermark strong { font-weight: 400; font-size: 26px; line-height: 38px; }
.watermark span { font-size: 19px; line-height: 26px; }

/* Taskbar */
.taskbar {
  flex: none;
  height: 66px;
  padding: 0 28px 0 30px;
  border-top: 2px solid #a9b6bf;
  background: linear-gradient(90deg, #cfe3ec, #d3e3ef 30%, #d8dae6 50%, #cfdfea 62%, #d2dfe9);
  display: grid;
  grid-template-columns: 1fr auto 1fr;
  align-items: center;
  font-family: "Open Sans", sans-serif;
}
.task-apps { display: flex; align-items: center; gap: 27px; padding-left: 7px; }
.task-search {
  width: 303px;
  height: 42px;
  margin: 0 -8px 0 -7px;
  padding: 0 14px;
  border: 1px solid #c3ccd4;
  border-radius: 21px;
  background: #f2f5f9;
  display: flex;
  align-items: center;
  gap: 14px;
}
.task-search input { width: 200px; font-size: 18px; }
.task-search input::placeholder { color: #616161; opacity: 1; }
.running, .focused { position: relative; }
.running::after, .focused::after {
  content: "";
  position: absolute;
  left: 50%;
  bottom: -9px;
  width: 8px;
  height: 4px;
  margin-left: -4px;
  border-radius: 2px;
  background: #7c8288;
}
.focused { width: 52px; height: 53px; margin-left: -9px; border-radius: 6px; background: #edf1f5; }
.focused::after { bottom: 0; width: 22px; margin-left: -11px; background: #0a6ed1; }
.badge {
  position: absolute;
  right: 2px;
  top: 3px;
  width: 22px;
  height: 22px;
  border-radius: 50%;
  background: #00897b;
  color: #d8efec;
  font: 12px/22px Roboto, sans-serif;
}
.tray { justify-self: end; display: flex; align-items: center; gap: 22px; }
.tray svg:nth-child(5) { margin-left: -12px; }
.clock-text { text-align: right; font-size: 16px; line-height: 22px; color: #1d1d1d; }
.tray svg:last-child { margin-left: -10px; }
```
